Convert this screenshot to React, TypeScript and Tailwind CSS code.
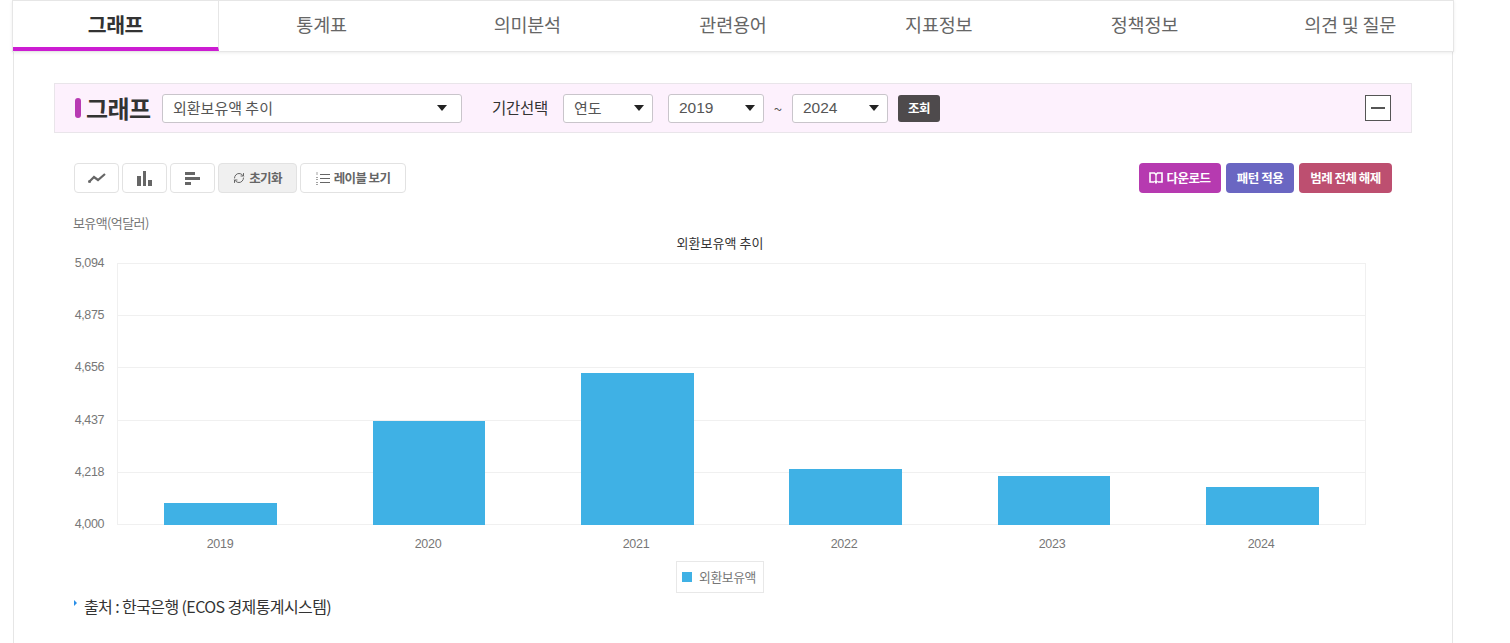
import { RefreshCw } from 'lucide-react'

const tabs = ['그래프', '통계표', '의미분석', '관련용어', '지표정보', '정책정보', '의견 및 질문']
const ticks = [
  { label: '5,094', y: 263 },
  { label: '4,875', y: 315 },
  { label: '4,656', y: 367 },
  { label: '4,437', y: 420 },
  { label: '4,218', y: 472 },
  { label: '4,000', y: 524 },
]
const bars = [
  { year: '2019', x: 164, w: 113, top: 503, labelX: 220 },
  { year: '2020', x: 373, w: 112, top: 421, labelX: 428 },
  { year: '2021', x: 581, w: 113, top: 373, labelX: 636 },
  { year: '2022', x: 789, w: 113, top: 469, labelX: 844 },
  { year: '2023', x: 998, w: 112, top: 476, labelX: 1052 },
  { year: '2024', x: 1206, w: 113, top: 487, labelX: 1261 },
]

function Caret() {
  return <span className="h-0 w-0 border-x-[5px] border-t-[6px] border-x-transparent border-t-[#222]" />
}

function Select({ label, className }: { label: string; className: string }) {
  return (
    <div className={`flex h-[29px] items-center justify-between rounded-[3px] border border-[#c9c5cb] bg-white pl-[10px] text-[#555] ${className}`}>
      <span>{label}</span>
      <Caret />
    </div>
  )
}

function ToolButton({ children, className }: { children: React.ReactNode; className: string }) {
  return (
    <div className={`flex h-[30px] items-center justify-center gap-[4px] rounded-[4px] border border-[#e2e2e2] text-[12.5px] font-bold tracking-[-0.6px] text-[#666] ${className}`}>
      {children}
    </div>
  )
}

function Chart() {
  return (
    <svg width="1358" height="374" viewBox="54 212 1358 374" className="block">
      <text x="73" y="228" fontSize="13" fill="#777" letterSpacing="-0.6">보유액(억달러)</text>
      <text x="720" y="248" fontSize="13" fill="#333" textAnchor="middle" letterSpacing="0.05">외환보유액 추이</text>
      <rect x="117.5" y="263.5" width="1248" height="261" fill="none" stroke="#f0f0f0" />
      {ticks.map((t) => (
        <g key={t.label}>
          <line x1="117" x2="1366" y1={t.y + 0.5} y2={t.y + 0.5} stroke="#f0f0f0" />
          <text x="104" y={t.y + 4} fontSize="12.5" fill="#777" textAnchor="end" letterSpacing="-0.4" fontFamily="'Liberation Sans', sans-serif">
            {t.label}
          </text>
        </g>
      ))}
      {bars.map((b) => (
        <g key={b.year}>
          <rect x={b.x} y={b.top} width={b.w} height={525 - b.top} fill="#3fb1e5" />
          <text x={b.labelX} y="547.5" fontSize="12.5" fill="#777" textAnchor="middle" letterSpacing="-0.3" fontFamily="'Liberation Sans', sans-serif">
            {b.year}
          </text>
        </g>
      ))}
    </svg>
  )
}

export default function App() {
  return (
    <div className="h-[643px] w-[1510px] overflow-hidden bg-white font-['Noto_Sans_CJK_KR','Noto_Sans',sans-serif]">
      <div className="relative z-10 ml-[12px] grid h-[52px] w-[1442px] grid-cols-7 border border-[#e6e6e6] bg-white shadow-[0_1px_3px_rgba(0,0,0,0.08)]">
        {tabs.map((tab, i) => (
          <div
            key={tab}
            className={
              i === 0
                ? 'flex h-[50px] items-center justify-center border-r border-b-[4px] border-r-[#e6e6e6] border-b-[#cc1cd2] pt-[1px] text-[20.5px] font-bold tracking-[-0.5px] text-[#333]'
                : 'flex h-[50px] items-center justify-center pb-[3px] text-[18.5px] tracking-[-0.2px] text-[#666]'
            }
          >
            {tab}
          </div>
        ))}
      </div>

      <div className="ml-[13px] h-[591px] w-[1440px] border-x border-[#e6e6e6] pl-[40px] pt-[31px]">
        <div className="flex h-[50px] w-[1358px] items-center border border-[#e9e5ea] bg-[#fdf1fd] pl-[20px]">
          <span className="h-[20px] w-[6px] rounded-[3px] bg-[#b83ab3]" />
          <span className="ml-[5px] w-[76px] whitespace-nowrap text-[24px] font-bold leading-none tracking-[-0.6px] text-[#333]">그래프</span>
          <Select label="외환보유액 추이" className="w-[300px] pr-[14px] text-[15px]" />
          <span className="ml-[30px] w-[71px] text-[15.5px] tracking-[-0.3px] text-[#333]">기간선택</span>
          <Select label="연도" className="w-[90px] pr-[8px] text-[15px]" />
          <Select label="2019" className="ml-[15px] w-[96px] pr-[8px] font-['Liberation_Sans'] text-[15.5px]" />
          <span className="w-[28px] text-center text-[15px] leading-none text-[#555]">~</span>
          <Select label="2024" className="w-[96px] pr-[8px] font-['Liberation_Sans'] text-[15.5px]" />
          <div className="ml-[10px] flex h-[27px] w-[42px] items-center justify-center rounded-[3px] bg-[#4e4a4c] text-[12.5px] font-bold tracking-[-0.5px] text-white">
            조회
          </div>
          <div className="ml-auto mr-[20px] flex h-[26px] w-[26px] items-center justify-center border border-[#555] bg-white">
            <span className="h-[2px] w-[14px] bg-[#555]" />
          </div>
        </div>

        <div className="mt-[30px] flex w-[1358px] items-center gap-[3px] px-[20px]">
          <ToolButton className="w-[45px]">
            <svg width="18" height="10" viewBox="0 0 18 10" fill="none" stroke="#666" strokeWidth="2.2">
              <circle cx="1.5" cy="8.5" r="0.4" />
              <path d="M1 9 L6 4 L10 7 L17 1" />
            </svg>
          </ToolButton>
          <ToolButton className="w-[45px]">
            <svg width="15" height="15" viewBox="0 0 15 15" fill="#666">
              <rect x="0" y="5" width="4" height="10" />
              <rect x="6" y="0" width="3" height="15" />
              <rect x="11" y="9" width="4" height="6" />
            </svg>
          </ToolButton>
          <ToolButton className="w-[45px]">
            <svg width="15" height="13" viewBox="0 0 15 13" fill="#666">
              <rect x="0" y="0" width="10" height="3" />
              <rect x="0" y="5" width="15" height="3" />
              <rect x="0" y="10" width="6" height="3" />
            </svg>
          </ToolButton>
          <ToolButton className="w-[79px] bg-[#f0f0f0]">
            <RefreshCw size={12} strokeWidth={2} />
            초기화
          </ToolButton>
          <ToolButton className="w-[106px]">
            <svg width="14" height="13" viewBox="0 0 14 13" fill="none" stroke="#666">
              <path d="M4 2.5 H14 M4 6.5 H14 M4 10.5 H14" strokeWidth="1.2" />
              <path d="M1 0.5 V3 M1 5 V8 M1 10 V13" strokeWidth="1.2" strokeDasharray="1 1" />
            </svg>
            레이블 보기
          </ToolButton>
          <div className="ml-auto flex h-[30px] w-[82px] items-center justify-center gap-[3px] rounded-[4px] bg-[#b63ab0] text-[12.5px] font-bold tracking-[-0.5px] text-white">
            <svg width="14" height="12" viewBox="0 0 14 12" fill="none" stroke="white" strokeWidth="1.6">
              <path d="M5 10 H1 V1 H5.5 L7 2.5 L8.5 1 H13 V10 H9" />
              <path d="M7 3 V11 M5.5 9 L7 11 L8.5 9" strokeWidth="1.3" />
            </svg>
            다운로드
          </div>
          <div className="ml-[2px] flex h-[30px] w-[68px] items-center justify-center rounded-[4px] bg-[#6a66c2] text-[12.5px] font-bold tracking-[-0.5px] text-white">
            패턴 적용
          </div>
          <div className="ml-[2px] flex h-[30px] w-[93px] items-center justify-center rounded-[4px] bg-[#bd4f70] text-[12.5px] font-bold tracking-[-0.5px] text-white">
            범례 전체 해제
          </div>
        </div>

        <div className="mt-[19px]">
          <Chart />
        </div>

        <div className="ml-[622px] mt-[-25px] flex h-[32px] w-[88px] items-center justify-center gap-[7px] border border-[#e8e8e8] pr-[2px] text-[12.8px] tracking-[-0.4px] text-[#777]">
          <span className="h-[10px] w-[10px] bg-[#3fb1e5]" />
          외환보유액
        </div>

        <div className="flex items-center pl-[20px] text-[16px] leading-[26px] tracking-[-0.6px] text-[#333]">
          <span className="mb-[7px] mr-[7px] h-0 w-0 border-y-[3px] border-l-[3px] border-y-transparent border-l-[#2a8fe8]" />
          출처 : 한국은행 (ECOS 경제통계시스템)
        </div>
      </div>
    </div>
  )
}
